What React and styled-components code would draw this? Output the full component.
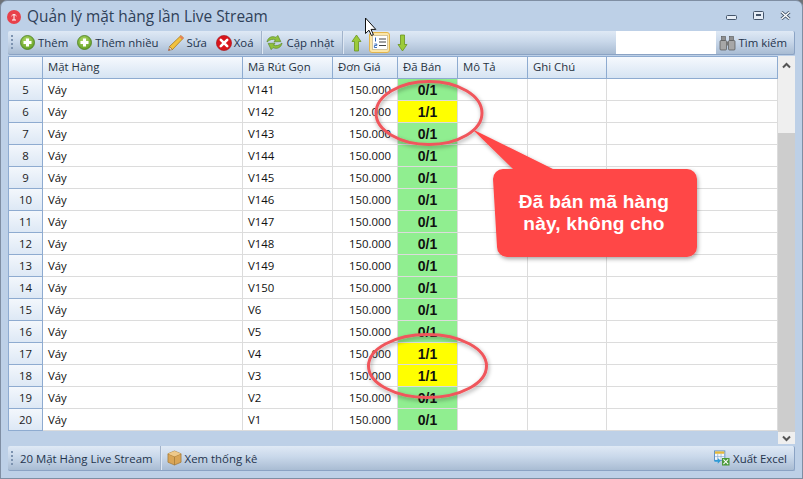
import React from "react";
import styled, { createGlobalStyle } from "styled-components";

const Global = createGlobalStyle`
  html, body { margin: 0; padding: 0; background: #6f7378; }
  #root { width: 803px; height: 479px; overflow: hidden; }
`;

const Frame = styled.div`
  position: relative;
  box-sizing: border-box;
  width: 803px;
  height: 479px;
  display: flex;
  flex-direction: column;
  background: #bdd0e7;
  border: 1px solid #7f8ea3;
  border-radius: 7px 7px 0 0;
  font-family: "Open Sans", "Noto Sans", sans-serif;
  font-size: 11.4px;
  color: #24344d;
  overflow: hidden;
`;

const TitleBar = styled.div`
  height: 30px;
  display: flex;
  align-items: center;
  gap: 6px;
  padding: 0 11px 0 6px;
`;

const AppBadge = styled.span`
  width: 14px;
  height: 14px;
  border-radius: 50%;
  background: #e8404a;
  display: inline-flex;
  align-items: center;
  justify-content: center;
  margin-top: 1px;
`;

const Title = styled.div`
  flex: 1;
  font-size: 15.4px;
  color: #2f4058;
`;

const WinButtons = styled.div`
  display: flex;
  gap: 16px;
  align-items: center;
  margin-top: -1px;
`;

const Bar = styled.div`
  box-sizing: border-box;
  margin: 0 7px;
  height: ${(p) => p.$h}px;
  display: flex;
  align-items: center;
  border-radius: 2px;
  background: linear-gradient(to bottom, #dfe9f5 0%, #c9d8ea 45%, #a9bcd3 100%);
  border-bottom: 1px solid #8ba3c4;
  border-right: 1px solid #8ba3c4;
`;

const Grip = styled.span`
  width: 2px;
  height: 15px;
  margin: 0 7px 0 3px;
  background: repeating-linear-gradient(to bottom, #7d93b0 0 2px, transparent 2px 4px);
`;

const ToolButton = styled.div`
  display: flex;
  align-items: center;
  gap: ${(p) => p.$gap ?? 3}px;
  padding: 0 ${(p) => p.$r ?? 0}px 0 ${(p) => p.$l ?? 0}px;
  white-space: nowrap;
  height: 100%;
`;

const Sep = styled.span`
  width: 1px;
  height: 100%;
  margin: 0 ${(p) => p.$r ?? 4}px 0 ${(p) => p.$l ?? 8}px;
  background: #a1b3cb;
  box-shadow: 1px 0 0 #dfe8f3;
`;

const Spacer = styled.div`
  flex: 1;
`;

const SearchInput = styled.div`
  width: 100px;
  height: 100%;
  background: #fff;
`;

const ActiveIcon = styled.span`
  width: 21px;
  height: 21px;
  margin-left: 7px;
  box-sizing: border-box;
  display: inline-flex;
  align-items: center;
  justify-content: center;
  background: #fbe6a8;
  border: 1px solid #e3b54c;
  border-radius: 3px;
`;

const GridRow = styled.div`
  display: flex;
  align-items: flex-start;
  margin: 1px 7px 0 7px;
  height: 388px;
`;

const Table = styled.div`
  width: 770px;
  flex: none;
  background: #fff;
  overflow: hidden;
`;

const columns = "35px 200px 90px 65px 60px 70px 79px 171px";

const HeadRow = styled.div`
  display: grid;
  grid-template-columns: ${columns};
  height: 23px;
`;

const HeadCell = styled.div`
  box-sizing: border-box;
  display: flex;
  align-items: center;
  padding: 0 0 2px 5px;
  background: linear-gradient(to bottom, #f6f9fd, #d6e4f3);
  border-right: 1px solid #8eabd0;
  border-bottom: 1px solid #8eabd0;
  border-top: 1px solid #8eabd0;
  white-space: nowrap;
  color: #26323f;
  &:first-child { border-left: 1px solid #8eabd0; }
`;

const Row = styled.div`
  display: grid;
  grid-template-columns: ${columns};
  height: 22px;
`;

const NumCell = styled.div`
  box-sizing: border-box;
  display: flex;
  align-items: center;
  justify-content: center;
  background: linear-gradient(to bottom, #f3f7fc, #dde8f5);
  border-left: 1px solid #8eabd0;
  border-right: 1px solid #8eabd0;
  border-bottom: 1px solid #8eabd0;
  color: #1c1c1c;
`;

const Cell = styled.div`
  box-sizing: border-box;
  display: flex;
  align-items: center;
  padding: 0 6px 0 5px;
  justify-content: ${(p) => (p.$right ? "flex-end" : "flex-start")};
  border-right: 1px solid #dcdcdc;
  border-bottom: 1px solid #dcdcdc;
  color: #111;
  white-space: nowrap;
`;

const SoldCell = styled.div`
  box-sizing: border-box;
  display: flex;
  align-items: center;
  justify-content: center;
  background: ${(p) => (p.$sold ? "#ffff00" : "#90ee90")};
  border-right: 1px solid #dcdcdc;
  border-bottom: 1px solid #dcdcdc;
  font-family: "Liberation Sans", sans-serif;
  font-weight: 700;
  font-size: 14px;
  color: #111;
`;

const ScrollBar = styled.div`
  width: 17px;
  height: 388px;
  flex: none;
  display: flex;
  flex-direction: column;
  background: #efefef;
`;

const ScrollArrow = styled.div`
  height: ${(p) => p.$h}px;
  flex: none;
  display: flex;
  align-items: center;
  justify-content: center;
`;

const ScrollTrack = styled.div`
  flex: 1;
  padding-top: 58px;
  display: flex;
`;

const ScrollThumb = styled.div`
  flex: 1;
  background: #cdcdcd;
`;

const Footer = styled(Bar)`
  margin-top: 2px;
`;

const Overlay = styled.svg`
  position: absolute;
  left: -1px;
  top: -1px;
  width: 803px;
  height: 479px;
  pointer-events: none;
`;

const CalloutText = styled.div`
  position: absolute;
  left: 492px;
  top: 190px;
  width: 202px;
  text-align: center;
  color: #fff;
  font-family: "Liberation Sans", sans-serif;
  font-weight: 700;
  font-size: 19.1px;
  line-height: 22px;
  letter-spacing: 0.2px;
`;

const Plus = () => (
  <svg width="15" height="15" viewBox="0 0 15 15">
    <defs>
      <radialGradient id="pg" cx="45%" cy="35%" r="70%">
        <stop offset="0" stopColor="#b4dc6a" />
        <stop offset="1" stopColor="#5c9a1e" />
      </radialGradient>
    </defs>
    <circle cx="7.5" cy="7.5" r="7" fill="url(#pg)" stroke="#4d7f22" strokeWidth="0.8" />
    <path d="M6 3.5h3V6h2.5v3H9v2.5H6V9H3.5V6H6z" fill="#fff" />
  </svg>
);

const Pencil = () => (
  <svg width="18" height="18" viewBox="0 0 18 18">
    <path d="M14 1.5l2.5 2.5L5.5 15.5l-3-3z" fill="#f2c23e" stroke="#a87a1c" strokeWidth="0.8" />
    <path d="M2.5 12.5l3 3-4 1z" fill="#f3d9b0" stroke="#8a6a3a" strokeWidth="0.6" />
    <path d="M1.5 16.5l1.8-.5-1.3-1.3z" fill="#c0392b" />
    <path d="M14 1.5l2.5 2.5-1.4 1.4-2.6-2.5z" fill="#e8805a" />
  </svg>
);

const Del = () => (
  <svg width="16" height="16" viewBox="0 0 16 16">
    <circle cx="8" cy="8" r="7.6" fill="#d8161c" stroke="#a51015" strokeWidth="0.6" />
    <path d="M4.8 4.8l6.4 6.4M11.2 4.8l-6.4 6.4" stroke="#fff" strokeWidth="2.6" strokeLinecap="round" />
  </svg>
);

const Refresh = () => (
  <svg width="17" height="17" viewBox="0 0 17 17">
    <path d="M1 8C1.6 3.6 6 1.4 10 3.4L11.8 1.4l3 6.2-6.8.2 1.5-2C6.8 4.8 3.8 5.4 1 8z" fill="#8fc13c" stroke="#5c8a24" strokeWidth="0.7" />
    <path d="M16 9c-.6 4.4-5 6.6-9 4.6l-1.8 2-3-6.2 6.8-.2-1.5 2c2.7 1 5.7.4 8.5-2.2z" fill="#8fc13c" stroke="#5c8a24" strokeWidth="0.7" />
  </svg>
);

const Arrow = ({ down }) => (
  <svg width="11" height="18" viewBox="0 0 11 18" style={down ? { transform: "scaleY(-1)" } : undefined}>
    <path d="M5.5 1L10 7.5H7.5V17h-4V7.5H1z" fill="#9ccb3a" stroke="#6b9420" strokeWidth="0.8" />
  </svg>
);

const ListIcon = () => (
  <svg width="16" height="15" viewBox="0 0 16 15">
    <rect x="0.5" y="0.5" width="15" height="14" fill="#fff" stroke="#b7a77c" strokeWidth="0.6" />
    <path d="M3.5 2.5v4" stroke="#2c62b4" strokeWidth="1" />
    <path d="M2.4 9h2.4v1.5H2.4V12.5h2.6" fill="none" stroke="#2c62b4" strokeWidth="0.9" />
    <path d="M7 4h7M7 7h7M7 10.5h7" stroke="#444" strokeWidth="1" />
  </svg>
);

const Binoculars = () => (
  <svg width="17" height="16" viewBox="0 0 17 16">
    <rect x="2.5" y="1.5" width="4" height="4" fill="#8f8f8f" stroke="#555" strokeWidth="0.6" />
    <rect x="10.5" y="1.5" width="4" height="4" fill="#8f8f8f" stroke="#555" strokeWidth="0.6" />
    <rect x="1" y="5.5" width="6.5" height="9.5" rx="1" fill="#a7a7a7" stroke="#555" strokeWidth="0.7" />
    <rect x="9.5" y="5.5" width="6.5" height="9.5" rx="1" fill="#a7a7a7" stroke="#555" strokeWidth="0.7" />
    <rect x="7.5" y="6.5" width="2" height="4" fill="#777" />
  </svg>
);

const BoxIcon = () => (
  <svg width="15" height="16" viewBox="0 0 16 17">
    <path d="M8 1l7 3v9l-7 3-7-3V4z" fill="#d9a556" stroke="#9a7233" strokeWidth="0.7" />
    <path d="M1 4l7 3 7-3M8 7v9" fill="none" stroke="#9a7233" strokeWidth="0.7" />
    <path d="M8 1l7 3-7 3-7-3z" fill="#eec98a" />
  </svg>
);

const ExcelIcon = () => (
  <svg width="16" height="16" viewBox="0 0 17 16">
    <rect x="0.5" y="0.5" width="11" height="10" fill="#f4f8fc" stroke="#5b8ec2" />
    <rect x="1" y="1" width="10" height="2.5" fill="#e4b93c" />
    <path d="M4 3.5v7M7.5 3.5v7M1 6.5h10" stroke="#86a8cc" strokeWidth="0.7" />
    <path d="M0.5 10H4V8l3.2 3L4 14v-2H0.5z" fill="#2e9bd6" />
    <rect x="8.5" y="8" width="8" height="8" fill="#4c9a3a" />
    <path d="M10 9.5l5 5M15 9.5l-5 5" stroke="#fff" strokeWidth="1.1" />
  </svg>
);

const Cursor = () => (
  <path d="M365.5 18v15.5l3.5-3.3 2.4 5.3 2-.9-2.4-5.2h4.8z" fill="#fff" stroke="#111" strokeWidth="1" />
);

const rows = [
  [5, "V141", "150.000", 0],
  [6, "V142", "120.000", 1],
  [7, "V143", "150.000", 0],
  [8, "V144", "150.000", 0],
  [9, "V145", "150.000", 0],
  [10, "V146", "150.000", 0],
  [11, "V147", "150.000", 0],
  [12, "V148", "150.000", 0],
  [13, "V149", "150.000", 0],
  [14, "V150", "150.000", 0],
  [15, "V6", "150.000", 0],
  [16, "V5", "150.000", 0],
  [17, "V4", "150.000", 1],
  [18, "V3", "150.000", 1],
  [19, "V2", "150.000", 0],
  [20, "V1", "150.000", 0],
];

const heads = ["", "Mặt Hàng", "Mã Rút Gọn", "Đơn Giá", "Đã Bán", "Mô Tả", "Ghi Chú", ""];

export default function App() {
  return (
    <Frame>
      <Global />
      <TitleBar>
        <AppBadge>
          <svg width="8" height="8" viewBox="0 0 8 8">
            <path d="M4 1v6M1.5 3a3 3 0 0 1 5 0M2 7h4" stroke="#fff" strokeWidth="1" fill="none" />
          </svg>
        </AppBadge>
        <Title>Quản lý mặt hàng lần Live Stream</Title>
        <WinButtons>
          <svg width="11" height="6" viewBox="0 0 11 6" style={{ marginTop: 4 }}>
            <rect x="0.5" y="0.5" width="10" height="4" rx="1" fill="#e6edf6" stroke="#44546a" />
          </svg>
          <svg width="11" height="9" viewBox="0 0 11 9">
            <rect x="0.5" y="0.5" width="10" height="8" rx="1" fill="#e6edf6" stroke="#44546a" />
            <rect x="3" y="3" width="5" height="2" fill="#44546a" />
          </svg>
          <svg width="11" height="9" viewBox="0 0 11 9">
            <path d="M1.5 1l8 7M9.5 1l-8 7" stroke="#44546a" strokeWidth="3" />
            <path d="M1.5 1l8 7M9.5 1l-8 7" stroke="#fff" strokeWidth="1.4" />
          </svg>
        </WinButtons>
      </TitleBar>

      <Bar $h={24}>
        <Grip />
        <ToolButton><Plus />Thêm</ToolButton>
        <ToolButton $l={9}><Plus />Thêm nhiều</ToolButton>
        <ToolButton $l={8} $gap={2}><Pencil />Sửa</ToolButton>
        <ToolButton $l={9} $gap={2}><Del />Xoá</ToolButton>
        <Sep />
        <ToolButton><Refresh />Cập nhật</ToolButton>
        <Sep $r={8} />
        <ToolButton><Arrow /></ToolButton>
        <ActiveIcon><ListIcon /></ActiveIcon>
        <ToolButton $l={7}><Arrow down /></ToolButton>
        <Spacer />
        <SearchInput />
        <ToolButton $l={3} $r={7}><Binoculars />Tìm kiếm</ToolButton>
      </Bar>

      <GridRow>
        <Table>
          <HeadRow>
            {heads.map((h, i) => (
              <HeadCell key={i}>{h}</HeadCell>
            ))}
          </HeadRow>
          {rows.map(([n, code, price, sold]) => (
            <Row key={n}>
              <NumCell>{n}</NumCell>
              <Cell>Váy</Cell>
              <Cell>{code}</Cell>
              <Cell $right>{price}</Cell>
              <SoldCell $sold={sold}>{sold}/1</SoldCell>
              <Cell />
              <Cell />
              <Cell />
            </Row>
          ))}
        </Table>
        <ScrollBar>
          <ScrollArrow $h={19}>
            <svg width="9" height="7" viewBox="0 0 9 7">
              <path d="M1 5.5l3.5-3.5 3.5 3.5" fill="none" stroke="#555" strokeWidth="2" />
            </svg>
          </ScrollArrow>
          <ScrollTrack>
            <ScrollThumb />
          </ScrollTrack>
          <ScrollArrow $h={12}>
            <svg width="9" height="7" viewBox="0 0 9 7">
              <path d="M1 1.5l3.5 3.5 3.5-3.5" fill="none" stroke="#555" strokeWidth="2" />
            </svg>
          </ScrollArrow>
        </ScrollBar>
      </GridRow>

      <Footer $h={25}>
        <Grip />
        <ToolButton>20 Mặt Hàng Live Stream</ToolButton>
        <Sep $l={7} $r={6} />
        <ToolButton><BoxIcon />Xem thống kê</ToolButton>
        <Spacer />
        <ToolButton $r={7}><ExcelIcon />Xuất Excel</ToolButton>
      </Footer>

      <Overlay viewBox="0 0 803 479">
        <defs>
          <filter id="sh" x="-20%" y="-20%" width="140%" height="140%">
            <feDropShadow dx="1" dy="2" stdDeviation="2" floodColor="#000" floodOpacity="0.35" />
          </filter>
        </defs>
        <g filter="url(#sh)">
          <path
            d="M503 169H513L472 129L553 169H687a10 10 0 0 1 10 10V247a10 10 0 0 1-10 10H507a10 10 0 0 1-10-10L493 179a10 10 0 0 1 10-10z"
            fill="#ff4747"
          />
          <ellipse cx="429" cy="113" rx="53" ry="31.5" fill="none" stroke="#f0565c" strokeWidth="3" />
          <ellipse cx="427.5" cy="366" rx="59" ry="31.5" fill="none" stroke="#f0565c" strokeWidth="3" />
        </g>
        <Cursor />
      </Overlay>
      <CalloutText>
        Đã bán mã hàng
        <br />
        này, không cho
      </CalloutText>
    </Frame>
  );
}
